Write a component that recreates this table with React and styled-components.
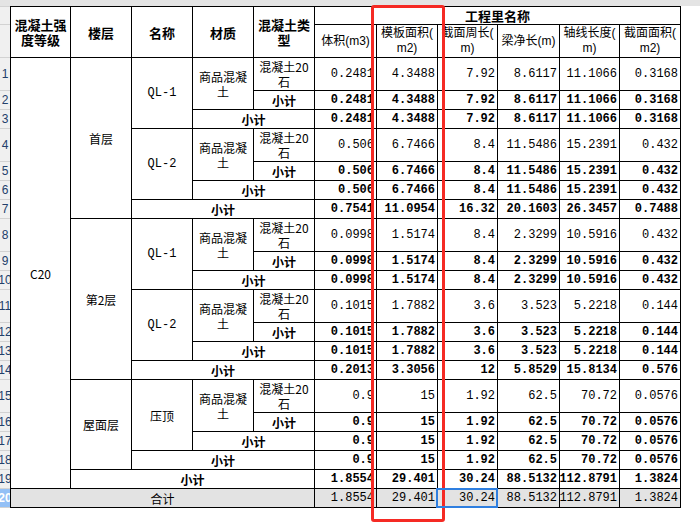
import { createGlobalStyle } from "styled-components";
import styled from "styled-components";

const COLS = "59px 60px 60px 60px 60px 61px 60px 59px 61px 59px 60px";
const TALL = new Set([1, 4, 8, 11, 15]);
const BODY_ROWS = Array.from({ length: 20 }, (_, i) => (TALL.has(i + 1) ? "32px" : "18px"));
const ROWS = ["17px", "32px", ...BODY_ROWS].join(" ");

const CJK = `"Noto Sans CJK SC", "Noto Sans", sans-serif`;
const NARROW = `"Liberation Sans", "Noto Sans CJK SC", sans-serif`;
const MONO = `"Liberation Mono", "Noto Sans CJK SC", monospace`;

const GlobalStyle = createGlobalStyle`
  body {
    margin: 0;
    background: #fff;
    font-family: ${CJK};
    color: #000;
  }
`;

const Page = styled.div`
  position: relative;
  width: 700px;
  height: 529px;
  overflow: hidden;
  background: #fff;
`;

const TopStrip = styled.div`
  height: 6px;
  background: #e4e4e4;
`;

const Body = styled.div`
  display: flex;
  align-items: flex-start;
`;

const RowHeads = styled.div`
  display: grid;
  width: 10px;
  grid-template-rows: ${ROWS};
  row-gap: 1px;
  padding-top: 1px;
  padding-bottom: 1px;
  background: #d2d2d2;
`;

const RowHead = styled.div`
  display: flex;
  align-items: center;
  justify-content: center;
  overflow: hidden;
  background: ${(p) => (p.$selected ? "#93c0f6" : "#f0f0f0")};
  color: ${(p) => (p.$selected ? "#fff" : "#23406b")};
  font: ${(p) => (p.$selected ? "bold" : "normal")} 12px "Liberation Sans", sans-serif;
  white-space: nowrap;
`;

const Sheet = styled.div`
  display: grid;
  grid-template-columns: ${COLS};
  grid-template-rows: ${ROWS};
  gap: 1px;
  padding: 1px;
  background: #000;
`;

const Cell = styled.div`
  grid-row: ${(p) => p.$r} / span ${(p) => p.$rs || 1};
  grid-column: ${(p) => p.$c} / span ${(p) => p.$cs || 1};
  display: flex;
  align-items: center;
  justify-content: center;
  text-align: center;
  background: ${(p) => (p.$total ? "#e3e3e3" : "#fff")};
  overflow: hidden;
`;

const HeadCell = styled(Cell)`
  font-size: 13px;
  font-weight: bold;
  line-height: 15px;
  padding: 0 3px;
`;

const SubHeadCell = styled(Cell)`
  font: 12px/15px ${NARROW};
  white-space: nowrap;
`;

const LabelCell = styled(Cell)`
  font-size: 12px;
  font-weight: ${(p) => (p.$bold ? "bold" : "normal")};
  line-height: 15px;
  padding: 0 3px;
`;

const CodeCell = styled(Cell)`
  font: 12px ${MONO};
`;

const NumCell = styled(Cell)`
  justify-content: flex-end;
  padding-right: 2px;
  font: ${(p) => (p.$bold ? "bold" : "normal")} 12px ${MONO};
  white-space: nowrap;
`;

const RedFrame = styled.div`
  position: absolute;
  left: 371px;
  top: 5px;
  width: 68px;
  height: 511px;
  border: 3px solid #f52a24;
  border-radius: 3px;
  pointer-events: none;
`;

const SelectBox = styled.div`
  position: absolute;
  left: 436px;
  top: 488px;
  width: 58px;
  height: 16px;
  border: 2px solid #2f7fe0;
  pointer-events: none;
`;

const V = {
  a: ["0.2481", "4.3488", "7.92", "8.6117", "11.1066", "0.3168"],
  b: ["0.506", "6.7466", "8.4", "11.5486", "15.2391", "0.432"],
  f1: ["0.7541", "11.0954", "16.32", "20.1603", "26.3457", "0.7488"],
  c: ["0.0998", "1.5174", "8.4", "2.3299", "10.5916", "0.432"],
  d: ["0.1015", "1.7882", "3.6", "3.523", "5.2218", "0.144"],
  f2: ["0.2013", "3.3056", "12", "5.8529", "15.8134", "0.576"],
  e: ["0.9", "15", "1.92", "62.5", "70.72", "0.0576"],
  t: ["1.8554", "29.401", "30.24", "88.5132", "112.8791", "1.3824"],
};

// [values, bold] per body row 1..20
const DATA = [
  ["a", false], ["a", true], ["a", true],
  ["b", false], ["b", true], ["b", true],
  ["f1", true],
  ["c", false], ["c", true], ["c", true],
  ["d", false], ["d", true], ["d", true],
  ["f2", true],
  ["e", false], ["e", true], ["e", true], ["e", true],
  ["t", true],
  ["t", false],
];

const HEADS = [
  ["体积(m3)"],
  ["模板面积(", "m2)"],
  ["截面周长(", "m)"],
  ["梁净长(m)"],
  ["轴线长度(", "m)"],
  ["截面面积(", "m2)"],
];

const GROUPS = [
  { row: 1, name: "QL-1" },
  { row: 4, name: "QL-2" },
  { row: 8, name: "QL-1" },
  { row: 11, name: "QL-2" },
  { row: 15, name: "压顶" },
];

const r = (n) => n + 2;

export default function App() {
  return (
    <Page>
      <GlobalStyle />
      <TopStrip />
      <Body>
        <RowHeads>
          <RowHead />
          <RowHead />
          {DATA.map((_, i) => (
            <RowHead key={i} $selected={i === 19}>{i + 1}</RowHead>
          ))}
        </RowHeads>
        <Sheet>
          <HeadCell $r={1} $rs={2} $c={1}>混凝土强度等级</HeadCell>
          <HeadCell $r={1} $rs={2} $c={2}>楼层</HeadCell>
          <HeadCell $r={1} $rs={2} $c={3}>名称</HeadCell>
          <HeadCell $r={1} $rs={2} $c={4}>材质</HeadCell>
          <HeadCell $r={1} $rs={2} $c={5}>混凝土类型</HeadCell>
          <HeadCell $r={1} $c={6} $cs={6}>工程里名称</HeadCell>
          {HEADS.map((lines, i) => (
            <SubHeadCell key={i} $r={2} $c={6 + i}>
              {lines.length > 1 ? <span>{lines[0]}<br />{lines[1]}</span> : lines[0]}
            </SubHeadCell>
          ))}

          <LabelCell $r={r(1)} $rs={19} $c={1}>C20</LabelCell>
          <LabelCell $r={r(1)} $rs={7} $c={2}>首层</LabelCell>
          <LabelCell $r={r(8)} $rs={7} $c={2}>第2层</LabelCell>
          <LabelCell $r={r(15)} $rs={4} $c={2}>屋面层</LabelCell>

          {GROUPS.map((g) => [
            g.name.startsWith("QL") ? (
              <CodeCell key={g.row + "n"} $r={r(g.row)} $rs={3} $c={3}>{g.name}</CodeCell>
            ) : (
              <LabelCell key={g.row + "n"} $r={r(g.row)} $rs={3} $c={3}>{g.name}</LabelCell>
            ),
            <LabelCell key={g.row + "m"} $r={r(g.row)} $rs={2} $c={4}>商品混凝土</LabelCell>,
            <LabelCell key={g.row + "t"} $r={r(g.row)} $c={5}>混凝土20石</LabelCell>,
            <LabelCell key={g.row + "s1"} $bold $r={r(g.row + 1)} $c={5}>小计</LabelCell>,
            <LabelCell key={g.row + "s2"} $bold $r={r(g.row + 2)} $c={4} $cs={2}>小计</LabelCell>,
          ])}

          <LabelCell $bold $r={r(7)} $c={3} $cs={3}>小计</LabelCell>
          <LabelCell $bold $r={r(14)} $c={3} $cs={3}>小计</LabelCell>
          <LabelCell $bold $r={r(18)} $c={3} $cs={3}>小计</LabelCell>
          <LabelCell $bold $r={r(19)} $c={2} $cs={4}>小计</LabelCell>
          <LabelCell $total $r={r(20)} $c={1} $cs={5}>合计</LabelCell>

          {DATA.map(([key, bold], i) =>
            V[key].map((v, j) => (
              <NumCell key={i + "-" + j} $bold={bold} $total={i === 19} $r={r(i + 1)} $c={6 + j}>
                {v}
              </NumCell>
            ))
          )}
        </Sheet>
      </Body>
      <RedFrame />
      <SelectBox />
    </Page>
  );
}
